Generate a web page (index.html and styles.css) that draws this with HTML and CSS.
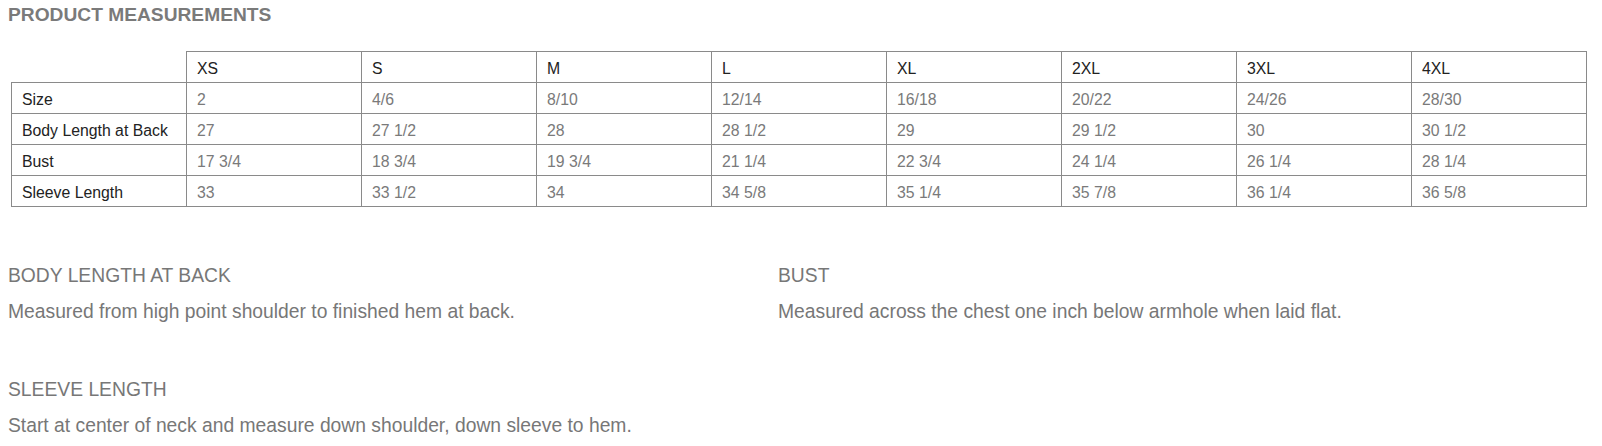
FILE: index.html
```html
<!DOCTYPE html>
<html>
<head>
<meta charset="utf-8">
<link rel="stylesheet" href="styles.css">
</head>
<body>
<div class="page">
  <h2 class="title">PRODUCT MEASUREMENTS</h2>
  <table class="measure">
    <thead>
      <tr><th class="corner"></th><th>XS</th><th>S</th><th>M</th><th>L</th><th>XL</th><th>2XL</th><th>3XL</th><th>4XL</th></tr>
    </thead>
    <tbody>
      <tr><th>Size</th><td>2</td><td>4/6</td><td>8/10</td><td>12/14</td><td>16/18</td><td>20/22</td><td>24/26</td><td>28/30</td></tr>
      <tr><th>Body Length at Back</th><td>27</td><td>27 1/2</td><td>28</td><td>28 1/2</td><td>29</td><td>29 1/2</td><td>30</td><td>30 1/2</td></tr>
      <tr><th>Bust</th><td>17 3/4</td><td>18 3/4</td><td>19 3/4</td><td>21 1/4</td><td>22 3/4</td><td>24 1/4</td><td>26 1/4</td><td>28 1/4</td></tr>
      <tr><th>Sleeve Length</th><td>33</td><td>33 1/2</td><td>34</td><td>34 5/8</td><td>35 1/4</td><td>35 7/8</td><td>36 1/4</td><td>36 5/8</td></tr>
    </tbody>
  </table>
  <div class="notes">
    <div class="note">
      <h3>BODY LENGTH AT BACK</h3>
      <p>Measured from high point shoulder to finished hem at back.</p>
    </div>
    <div class="note">
      <h3>BUST</h3>
      <p>Measured across the chest one inch below armhole when laid flat.</p>
    </div>
    <div class="note">
      <h3>SLEEVE LENGTH</h3>
      <p>Start at center of neck and measure down shoulder, down sleeve to hem.</p>
    </div>
  </div>
</div>
</body>
</html>
```

FILE: styles.css
```css
html, body {
  margin: 0;
  padding: 0;
  background: #fff;
}
body {
  font-family: "Liberation Sans", Arial, sans-serif;
  color: #777;
}
.page {
  padding: 0 0 0 8px;
}
.title {
  margin: 0;
  padding-top: 4px;
  font-size: 19.2px;
  line-height: 22px;
  font-weight: bold;
  color: #7a7a7a;
}
.measure {
  margin: 25px 0 0 3px;
  border-collapse: collapse;
  table-layout: fixed;
  width: 1576px;
  font-size: 15.8px;
}
.measure th, .measure td {
  border: 1px solid #8a8a8a;
  padding: 3px 10px 0;
  height: 27px;
  text-align: left;
  font-weight: normal;
  vertical-align: middle;
}
.measure th {
  color: #222;
}
.measure td {
  color: #7a7a7a;
}
.measure th.corner {
  border-top: none;
  border-left: none;
}
.notes {
  display: grid;
  grid-template-columns: 770px 770px;
  row-gap: 56px;
  margin-top: 58px;
}
.note h3 {
  margin: 0;
  font-size: 19.3px;
  line-height: 22px;
  font-weight: normal;
  color: #777;
}
.note p {
  margin: 14px 0 0;
  font-size: 19.3px;
  line-height: 22px;
  color: #777;
}
```
